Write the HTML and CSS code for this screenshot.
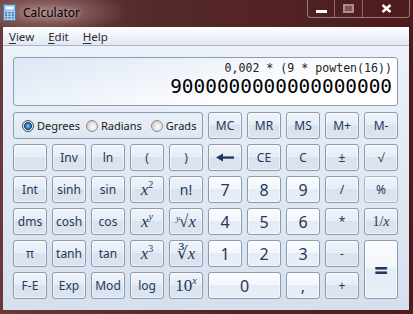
FILE: index.html
```html
<!DOCTYPE html>
<html lang="en">
<head>
    <meta charset="UTF-8">
    <title>Calculator</title>
    <link rel="stylesheet" href="styles.css">
</head>
<body>
<div class="window">
    <div class="titlebar">
        <svg class="app-icon" width="13" height="17" viewBox="0 0 13 17">
            <rect x="0.5" y="0.5" width="12" height="16" rx="1" fill="#a9cdee" stroke="#4b79a8"/>
            <rect x="2" y="2" width="9" height="4" fill="#f2f8fe" stroke="#6f97bf" stroke-width="0.6"/>
            <g fill="#4b79a8">
                <rect x="2" y="8" width="2" height="1.5"/><rect x="5.5" y="8" width="2" height="1.5"/><rect x="9" y="8" width="2" height="1.5"/>
                <rect x="2" y="10.5" width="2" height="1.5"/><rect x="5.5" y="10.5" width="2" height="1.5"/><rect x="9" y="10.5" width="2" height="1.5"/>
                <rect x="2" y="13" width="2" height="1.5"/><rect x="5.5" y="13" width="2" height="1.5"/><rect x="9" y="13" width="2" height="1.5"/>
            </g>
        </svg>
        <span class="title">Calculator</span>
        <div class="caption">
            <span class="cap cap-min"><i></i></span>
            <span class="cap cap-max"><i></i></span>
            <span class="cap cap-close">
                <svg width="11" height="9" viewBox="0 0 11 9"><path d="M1.5 1 L9.5 8 M9.5 1 L1.5 8" stroke="#fff" stroke-width="2.4"/></svg>
            </span>
        </div>
    </div>

    <div class="client">
        <ul class="menu">
            <li><u>V</u>iew</li>
            <li><u>E</u>dit</li>
            <li><u>H</u>elp</li>
        </ul>

        <div class="body">
            <div class="display">
                <div class="expr">0,002 * (9 * powten(16))</div>
                <div class="result">9000000000000000000</div>
            </div>

            <div class="keys">
                <div class="angle">
                    <label class="radio"><span class="dot on"></span>Degrees</label>
                    <label class="radio"><span class="dot"></span>Radians</label>
                    <label class="radio grads"><span class="dot"></span>Grads</label>
                </div>
                <button class="key">MC</button>
                <button class="key">MR</button>
                <button class="key">MS</button>
                <button class="key">M+</button>
                <button class="key">M-</button>

                <button class="key"></button>
                <button class="key">Inv</button>
                <button class="key">ln</button>
                <button class="key">(</button>
                <button class="key">)</button>
                <button class="key">
                    <svg width="18" height="9" viewBox="0 0 18 9"><path d="M0 4.5 L7 0.5 L7 8.5 Z" fill="#1e395b"/><rect x="6" y="3.4" width="12" height="2.3" fill="#1e395b"/></svg>
                </button>
                <button class="key">CE</button>
                <button class="key">C</button>
                <button class="key">±</button>
                <button class="key">√</button>

                <button class="key">Int</button>
                <button class="key">sinh</button>
                <button class="key">sin</button>
                <button class="key math"><i>x</i><sup>2</sup></button>
                <button class="key big">n!</button>
                <button class="key num">7</button>
                <button class="key num">8</button>
                <button class="key num">9</button>
                <button class="key">/</button>
                <button class="key faint">%</button>

                <button class="key">dms</button>
                <button class="key">cosh</button>
                <button class="key">cos</button>
                <button class="key math"><i>x</i><sup><i>y</i></sup></button>
                <button class="key math"><span class="pre"><i>y</i></span>√<i>x</i></button>
                <button class="key num">4</button>
                <button class="key num">5</button>
                <button class="key num">6</button>
                <button class="key">*</button>
                <button class="key math small">1/<i>x</i></button>

                <button class="key">π</button>
                <button class="key">tanh</button>
                <button class="key">tan</button>
                <button class="key math"><i>x</i><sup>3</sup></button>
                <button class="key math">∛<i>x</i></button>
                <button class="key num">1</button>
                <button class="key num">2</button>
                <button class="key num">3</button>
                <button class="key">-</button>
                <button class="key num equals">=</button>

                <button class="key">F-E</button>
                <button class="key">Exp</button>
                <button class="key">Mod</button>
                <button class="key">log</button>
                <button class="key math ten">10<sup><i>x</i></sup></button>
                <button class="key num zero">0</button>
                <button class="key num">,</button>
                <button class="key">+</button>
            </div>
        </div>
    </div>
</div>
</body>
</html>
```

FILE: styles.css
```css
* {
    box-sizing: border-box;
}
body {
    margin: 0;
    width: 413px;
    height: 314px;
    overflow: hidden;
    font-family: "Noto Sans", "Open Sans", sans-serif;
}
.window {
    width: 413px;
    height: 314px;
    display: flex;
    flex-direction: column;
    background: linear-gradient(90deg, #663a3a 0%, #562929 40%, #4c1c1c 100%);
}
/* title bar */
.titlebar {
    height: 27px;
    display: flex;
    align-items: flex-start;
    background: radial-gradient(ellipse 80px 22px at 48px 12px, rgba(255, 220, 220, 0.4), rgba(255, 220, 220, 0));
}
.app-icon {
    margin: 4px 0 0 3px;
}
.title {
    margin: 4px 0 0 7px;
    font-size: 12px;
    color: #000;
    text-shadow: 0 0 6px rgba(255, 240, 240, 0.8);
}
.caption {
    margin-left: auto;
    margin-right: 3px;
    display: flex;
    height: 18px;
    border: 1px solid rgba(225, 190, 190, 0.55);
    border-top: none;
    border-radius: 0 0 4px 4px;
}
.cap {
    display: flex;
    align-items: center;
    justify-content: center;
    border-left: 1px solid rgba(225, 190, 190, 0.45);
}
.cap:first-child {
    border-left: none;
}
.cap-min {
    width: 26px;
}
.cap-min i {
    width: 11px;
    height: 3px;
    margin-top: 5px;
    background: #fff;
}
.cap-max {
    width: 28px;
}
.cap-max i {
    width: 11px;
    height: 9px;
    border: 2px solid #b08c8c;
    background: #7d5555;
}
.cap-close {
    width: 47px;
}
/* client area */
.client {
    flex: 1;
    margin: 0 4px 4px 3px;
    display: flex;
    flex-direction: column;
    background: linear-gradient(#eef3fa, #d6e0ed);
}
.menu {
    list-style: none;
    margin: 0;
    padding: 0 0 0 6px;
    height: 19px;
    display: flex;
    gap: 14px;
    align-items: center;
    font-size: 11.5px;
    color: #2b2b2b;
    background: linear-gradient(#fdfeff, #e1e8f3);
    border-bottom: 1px solid #aab5c4;
}
.menu u {
    text-decoration-thickness: 1px;
    text-underline-offset: 2px;
}
.body {
    padding: 11px 11px 10px 10px;
}
.display {
    height: 49px;
    width: 385px;
    border: 1px solid #8c9cb3;
    border-radius: 3px;
    background: linear-gradient(165deg, #dce6f4 0%, #eef3fa 35%, #fff 70%);
    text-align: right;
    padding: 3px 5px 0 0;
    font-family: "DejaVu Sans Mono", "Liberation Mono", monospace;
    color: #000;
}
.expr {
    font-size: 11.6px;
    line-height: 14px;
    color: #222;
}
.result {
    font-size: 19.4px;
    line-height: 24px;
}
/* keypad */
.keys {
    margin-top: 6px;
    display: grid;
    grid-template-columns: repeat(10, 34px);
    grid-auto-rows: 27px;
    gap: 5px;
}
.angle {
    grid-column: span 5;
    display: flex;
    align-items: center;
    padding-left: 8px;
    gap: 6px;
    border: 1px solid #8c9cb3;
    border-radius: 3px;
    background: linear-gradient(#eaf0f8, #dfe7f2);
}
.radio {
    display: flex;
    align-items: center;
    gap: 3px;
    font-size: 11px;
    color: #1b1b1b;
}
.radio.grads {
    margin-left: 3px;
}
.dot {
    width: 12px;
    height: 12px;
    border-radius: 50%;
    border: 1px solid #8d8d8d;
    background: radial-gradient(circle at 60% 60%, #fff 0%, #e6e6e6 40%, #bcbcbc 100%);
}
.dot.on {
    border-color: #3a4a5c;
    background: radial-gradient(circle, #8fd0ff 0%, #2a7bc0 35%, #12426e 52%, #f2f4f6 60%, #c9ced4 100%);
}
.key {
    padding: 0;
    display: flex;
    align-items: center;
    justify-content: center;
    border: 1px solid #8a9ab1;
    border-radius: 3px;
    background: linear-gradient(#f0f4fa 0%, #e7edf6 46%, #d9e2ee 50%, #dbe4ef 100%);
    box-shadow: inset 0 0 0 1px rgba(255, 255, 255, 0.55);
    color: #1e395b;
    font-family: "Noto Sans", "Open Sans", sans-serif;
    font-size: 12px;
}
.key.num {
    font-size: 16px;
    background: linear-gradient(#fbfcfe 0%, #f3f6fb 46%, #e6ecf5 50%, #e9eff7 100%);
}
.key.big {
    font-size: 14px;
}
.key.faint {
    border-color: #a9b6c8;
}
.key.math {
    font-family: "Liberation Serif", "DejaVu Serif", serif;
    font-size: 17px;
}
.key.math.small {
    font-size: 14px;
}
.key sup {
    font-size: 10px;
    line-height: 0;
    position: relative;
    top: -5px;
    vertical-align: baseline;
}
.key .pre {
    font-size: 9px;
    line-height: 1;
    align-self: flex-start;
    margin: 5px -1px 0 0;
}
.key.equals {
    grid-row: span 2;
    font-size: 24px;
    font-weight: bold;
}
.key.zero {
    grid-column: span 2;
}
```
